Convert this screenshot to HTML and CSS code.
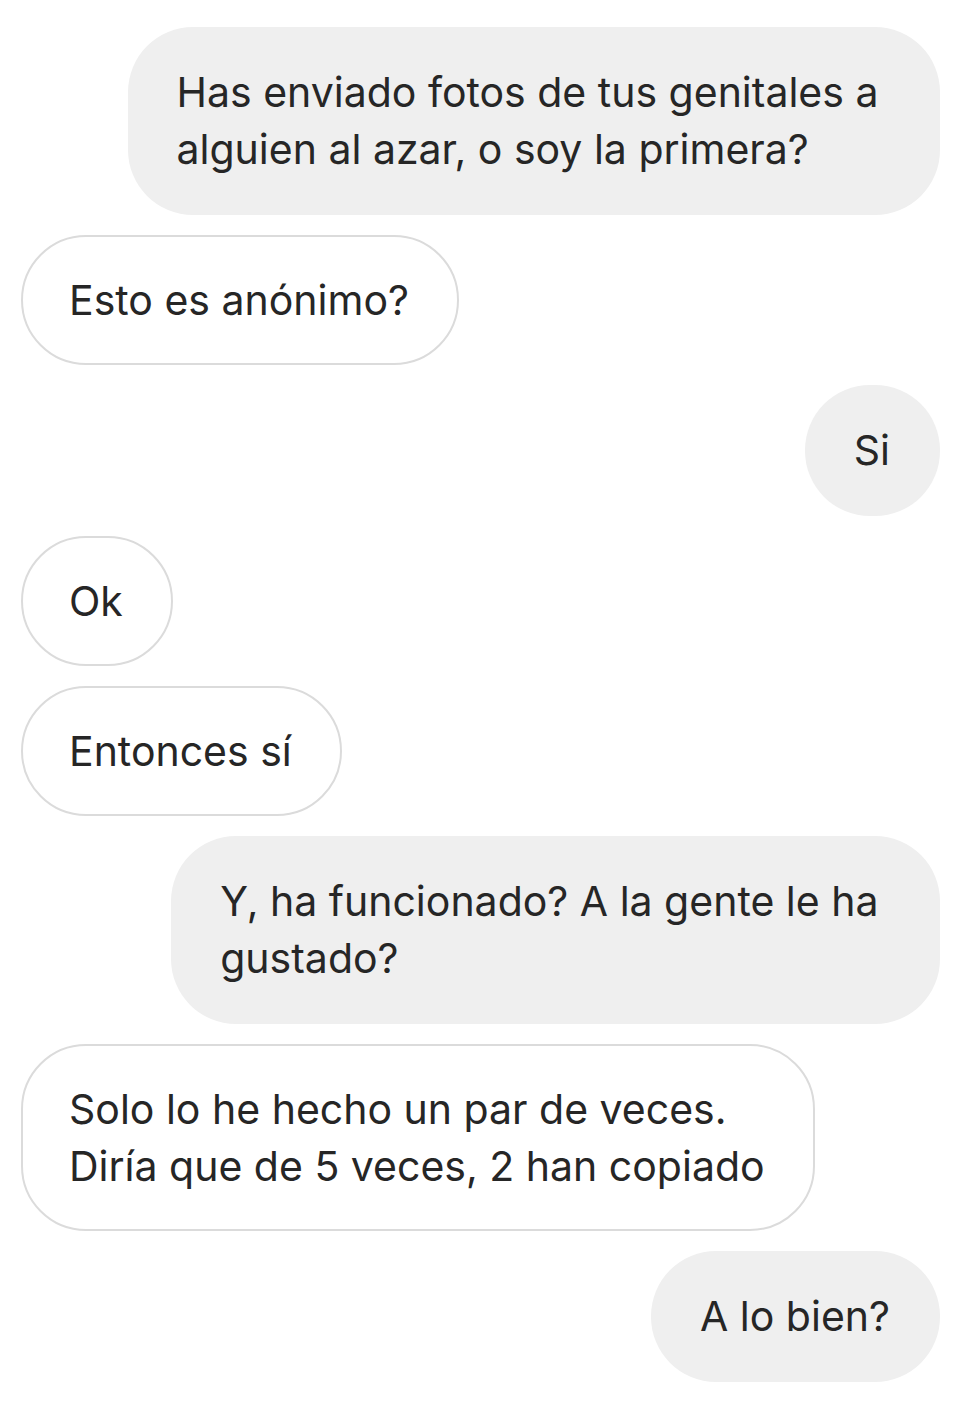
FILE: index.html
```html
<!DOCTYPE html>
<html lang="es">
<head>
<meta charset="utf-8">
<title>Chat</title>
<link rel="stylesheet" href="styles.css">
</head>
<body>
<div class="chat">
  <div class="msg out">Has enviado fotos de tus genitales a&nbsp;<br>alguien al azar, o soy la primera?</div>
  <div class="msg in">Esto es anónimo?</div>
  <div class="msg out">Si</div>
  <div class="msg in">Ok</div>
  <div class="msg in">Entonces sí</div>
  <div class="msg out">Y, ha funcionado? A la gente le ha&nbsp;<br>gustado?</div>
  <div class="msg in">Solo lo he hecho un par de veces.<br>Diría que de 5 veces, 2 han copiado</div>
  <div class="msg out">A lo bien?</div>
</div>
</body>
</html>
```

FILE: styles.css
```css
html, body {
  margin: 0;
  padding: 0;
  background: #ffffff;
}

.chat {
  display: flex;
  flex-direction: column;
  gap: 20px;
  padding: 27px 25px 0 21px;
  font-family: Inter, "Liberation Sans", Arial, sans-serif;
  font-size: 41px;
  line-height: 57px;
  color: #262626;
}

.msg {
  border-radius: 65px;
  white-space: nowrap;
}

.msg.out {
  align-self: flex-end;
  background: #efefef;
  padding: 37px 50px 37px 49px;
}

.msg.in {
  align-self: flex-start;
  background: #ffffff;
  border: 2px solid #dbdbdb;
  padding: 35px 48px 34px 46px;
}
```
